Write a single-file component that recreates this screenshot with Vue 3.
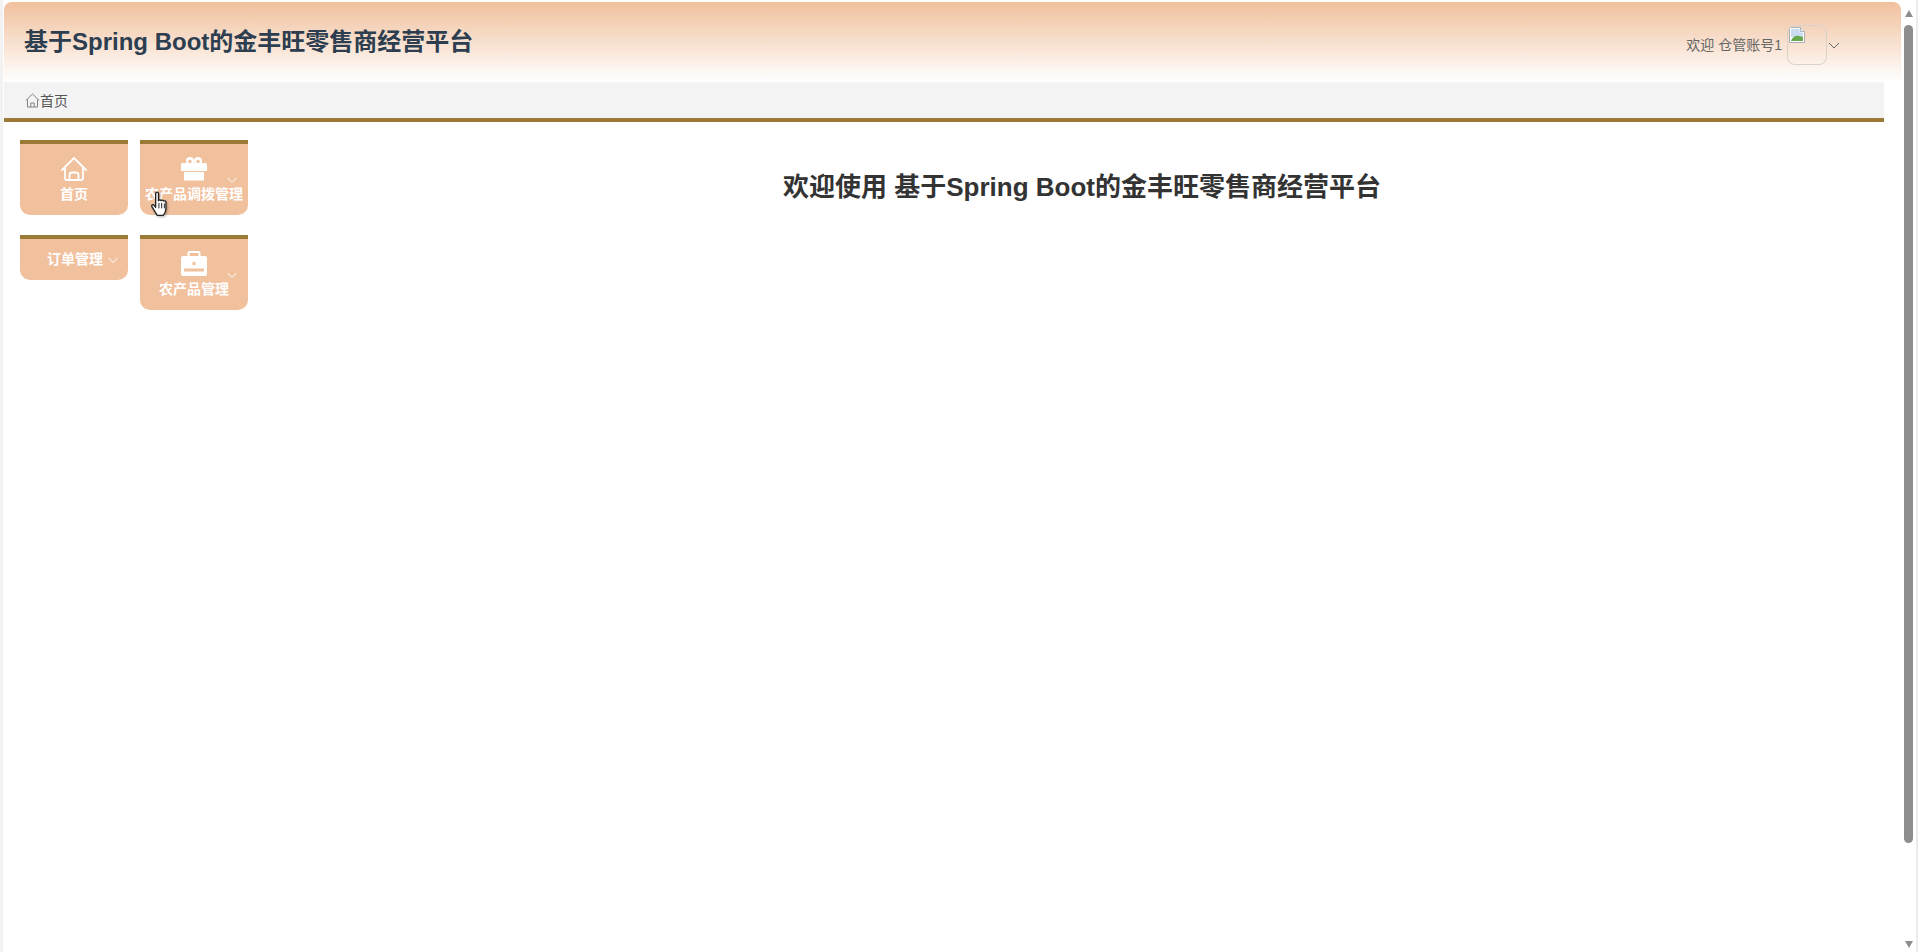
<script setup>
const menus = [
  { name: '首页', icon: 'home' },
  { name: '农产品调拨管理', icon: 'gift', arrow: true },
  { name: '订单管理', inline: true, arrow: true },
  { name: '农产品管理', icon: 'bag', arrow: true },
]
</script>

<template>
  <div class="shell">
    <div class="page">
      <header class="topbar">
        <div class="site-title">基于Spring Boot的金丰旺零售商经营平台</div>
        <div class="user">
          <span class="user-name">欢迎 仓管账号1</span>
          <div class="avatar">
            <svg width="16" height="16" viewBox="0 0 16 16">
              <path d="M.5.5h11l4 4v11H.5z" fill="#fff" stroke="#a8b0b6" />
              <path d="M11.500.5v4h4" fill="#eef2f6" stroke="#a8b0b6" />
              <path d="M2 2h8.500v3.500H14V10H2z" fill="#c9dcf2" />
              <path d="M2 14c1-4 5-6 8-5l4 1v4z" fill="#6aa84f" />
            </svg>
          </div>
          <svg class="chevron" width="12" height="12" viewBox="0 0 12 12"><path d="M1 4l5 5 5-5" fill="none" stroke="#666" /></svg>
        </div>
      </header>

      <div class="crumbs">
        <svg width="15" height="15" viewBox="0 0 15 15" class="crumb-icon">
          <path d="M.8 7.500L7.500 1l6.700 6.500M2.500 6.500v7.500h10V6.500M5.800 14V10h3.400v4" fill="none" stroke="#777" stroke-width=".9" />
        </svg>
        <span>首页</span>
      </div>

      <div class="content">
        <nav class="menu">
          <div v-for="m in menus" :key="m.name" class="menu-item" :class="{ inline: m.inline }">
            <svg v-if="m.icon === 'home'" class="menu-icon" width="26" height="26" viewBox="0 0 26 26">
              <path d="M1 14L13 2l12 12" fill="none" stroke="#fff" stroke-width="1.800" stroke-linecap="round" stroke-linejoin="round" />
              <path d="M4 11v11a2 2 0 0 0 2 2h14a2 2 0 0 0 2-2V11" fill="none" stroke="#fff" stroke-width="1.800" />
              <path d="M8.500 24v-5a2.500 2.500 0 0 1 2.500-2.500h4a2.500 2.500 0 0 1 2.500 2.500v5" fill="none" stroke="#fff" stroke-width="1.800" />
            </svg>
            <svg v-else-if="m.icon === 'gift'" class="menu-icon" width="26" height="26" viewBox="0 0 26 26">
              <circle cx="9" cy="5" r="4" fill="#fff" />
              <circle cx="17" cy="5" r="4" fill="#fff" />
              <circle cx="9" cy="5.500" r="1.700" fill="#f1c09d" />
              <circle cx="17" cy="5.500" r="1.700" fill="#f1c09d" />
              <path d="M0 8.500A1.500 1.500 0 0 1 1.500 7h23A1.500 1.500 0 0 1 26 8.500V15H0zM3 16h20v8.500H3z" fill="#fff" />
            </svg>
            <svg v-else-if="m.icon === 'bag'" class="menu-icon" width="26" height="26" viewBox="0 0 26 26">
              <path d="M7.500 6V2a1 1 0 0 1 1-1h9a1 1 0 0 1 1 1v4" fill="none" stroke="#fff" stroke-width="2" />
              <path d="M2 5h22a2 2 0 0 1 2 2v16a2 2 0 0 1-2 2H2a2 2 0 0 1-2-2V7a2 2 0 0 1 2-2z" fill="#fff" />
              <path d="M3 17.500h20v3H3z" fill="#f1c09d" />
              <path d="M11.500 11h3v3h-3z" fill="#f1c09d" />
            </svg>
            <span class="menu-label">{{ m.name }}</span>
            <svg v-if="m.arrow" class="menu-arrow" width="12" height="12" viewBox="0 0 12 12">
              <path d="M1.500 4l4.500 4.500L10.500 4" fill="none" stroke="#fff" />
            </svg>
          </div>
        </nav>
        <h1 class="welcome">欢迎使用 基于Spring Boot的金丰旺零售商经营平台</h1>
      </div>

      <svg class="cursor" width="20" height="26" viewBox="0 0 18 24">
        <path d="M5 2c1-1.500 2.500-1 2.600.5V9c.5-1 2-1 2.400 0 .5-.8 2-.8 2.400.3.700-.5 2-.2 2.100 1V16c0 3-1.500 5.500-2.500 6.500H6.500C5 20 3 17 1.500 14.500c-.8-1.500 1-2.500 2-1.300l1.500 1.800z" fill="#fff" stroke="#222" stroke-width="1.200" stroke-linejoin="round" />
        <path d="M8 11v5M10.500 11v5M13 11.500V16" stroke="#222" stroke-width=".9" />
      </svg>
    </div>

    <div class="scrollbar">
      <div class="arrow-up"></div>
      <div class="thumb"></div>
      <div class="arrow-down"></div>
    </div>
    <div class="edge"></div>
  </div>
</template>

<style>
html, body { margin: 0; overflow: hidden; background: #fff; }
</style>

<style scoped>
.shell { display: flex; height: 952px; font-family: "Liberation Sans", "Noto Sans CJK SC", sans-serif; }
.page { position: relative; flex: 1; padding: 2px 0 0 4px; background: #fff; min-width: 0; box-shadow: inset 3px 0 0 #f2f2f2; }
.topbar { display: flex; justify-content: space-between; height: 80px; margin-right: 2px; background: linear-gradient(180deg, #f1c09d 0%, #fff 100%); border-radius: 8px 8px 0 0; }
.site-title { padding: 24px 0 0 20px; font-size: 24px; font-weight: 700; line-height: 32px; color: #2c3e50; }
.user { display: flex; align-items: flex-start; padding: 23px 61px 0 0; }
.user-name { margin-top: 10px; font-size: 14px; line-height: 20px; color: #666; }
.avatar { box-sizing: border-box; width: 40px; height: 40px; margin-left: 5px; padding: 1px; border: 1px solid #d9d2cb; border-radius: 8px; overflow: hidden; }
.avatar svg { display: block; }
.chevron { margin: 14px 0 0 1px; }
.crumbs { display: flex; align-items: center; height: 36px; margin-right: 19px; padding-left: 21px; background: #f3f3f3; border-bottom: 4px solid #9b7a38; font-size: 14px; color: #555; }
.content { display: flex; align-items: flex-start; margin-right: 19px; }
.menu { display: grid; grid-template-columns: 108px 108px; gap: 20px 12px; align-items: start; width: 228px; padding: 18px 0 0 16px; flex-shrink: 0; }
.menu-item { position: relative; box-sizing: border-box; display: flex; flex-direction: column; align-items: center; height: 75px; padding-top: 12px; background: #f1c09d; border-top: 4px solid #9b7a38; border-radius: 0 0 10px 10px; color: #fff; }
.menu-item.inline { flex-direction: row; justify-content: flex-end; height: 45px; padding: 10px 9px 0 0; align-items: flex-start; }
.menu-icon { display: block; flex-shrink: 0; }
.menu-label { margin-top: 2px; font-size: 14px; font-weight: 700; line-height: 20px; white-space: nowrap; }
.inline .menu-label { margin: 0 4px 0 0; }
.menu-arrow { position: absolute; right: 10px; top: 30px; }
.inline .menu-arrow { position: static; margin-top: 5px; }
.welcome { flex: 1; margin: 0; padding: 47px 0 0 32px; font-size: 26px; font-weight: 700; line-height: 36px; color: #333; text-align: center; }
.cursor { position: absolute; left: 150px; top: 191px; filter: drop-shadow(1px 1px 1px rgba(0, 0, 0, .3)); }
.scrollbar { display: flex; flex-direction: column; align-items: center; width: 11px; flex-shrink: 0; margin-right: 2px; background: #fff; }
.arrow-up, .arrow-down { width: 0; height: 0; border-left: 4.5px solid transparent; border-right: 4.5px solid transparent; }
.arrow-up { margin-top: 10px; border-bottom: 7px solid #8e8e8e; }
.arrow-down { margin-bottom: 4px; border-top: 7px solid #8e8e8e; }
.thumb { width: 9px; height: 818px; margin-top: 8px; margin-bottom: auto; background: #8e8e8e; border-radius: 5px; }
.edge { width: 2px; margin-right: 2px; background: #ececec; }
</style>
